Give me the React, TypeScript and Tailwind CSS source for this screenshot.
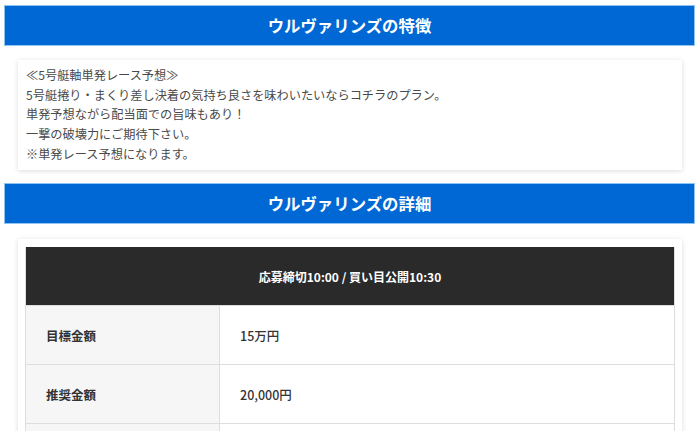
import React from "react";

const font = { fontFamily: '"Noto Sans CJK JP", "Noto Sans", sans-serif' };

function Heading({ children }: { children: React.ReactNode }) {
  return (
    <div className="ml-[4px] w-[691px] h-[41px] bg-[#0068d4] border border-[#8ec3f2] flex items-center justify-center text-white font-bold text-[16.4px]">
      {children}
    </div>
  );
}

function Row({ label, value }: { label: string; value: string }) {
  return (
    <div className="flex h-[59px] border-t border-[#dddddd]">
      <div className="w-[194px] bg-[#f6f6f6] border-r border-[#dddddd] flex items-center pl-[20px] pt-[2px] font-bold text-[12.5px] text-[#333]">
        {label}
      </div>
      <div className="flex-1 flex items-center pl-[20px] pt-[2px] text-[12.5px] text-[#333] font-medium">
        {value}
      </div>
    </div>
  );
}

export default function App() {
  return (
    <div style={font} className="w-[700px] h-[431px] overflow-hidden bg-white pt-[5px]">
      <Heading>ウルヴァリンズの特徴</Heading>
      <div className="mt-[14px] mx-[18px] h-[110px] bg-white shadow-[0_1px_5px_rgba(0,0,0,0.14)] pl-[8px] pt-[6px] text-[12.2px] leading-[19.7px] text-[#4a4a4a]">
        <div>≪5号艇軸単発レース予想≫</div>
        <div>5号艇捲り・まくり差し決着の気持ち良さを味わいたいならコチラのプラン。</div>
        <div>単発予想ながら配当面での旨味もあり！</div>
        <div>一撃の破壊力にご期待下さい。</div>
        <div>※単発レース予想になります。</div>
      </div>
      <div className="mt-[13px]">
        <Heading>ウルヴァリンズの詳細</Heading>
      </div>
      <div className="mt-[15px] mx-[18px] h-[300px] bg-white shadow-[0_1px_5px_rgba(0,0,0,0.14)] px-[7px] pt-[8px]">
        <div className="border-x border-[#dddddd]">
          <div className="h-[58px] bg-[#2a2a2a] flex items-center justify-center pt-[1px] text-white font-bold text-[12px]">
            応募締切10:00 / 買い目公開10:30
          </div>
          <Row label="目標金額" value="15万円" />
          <Row label="推奨金額" value="20,000円" />
          <Row label="" value="" />
        </div>
      </div>
    </div>
  );
}
